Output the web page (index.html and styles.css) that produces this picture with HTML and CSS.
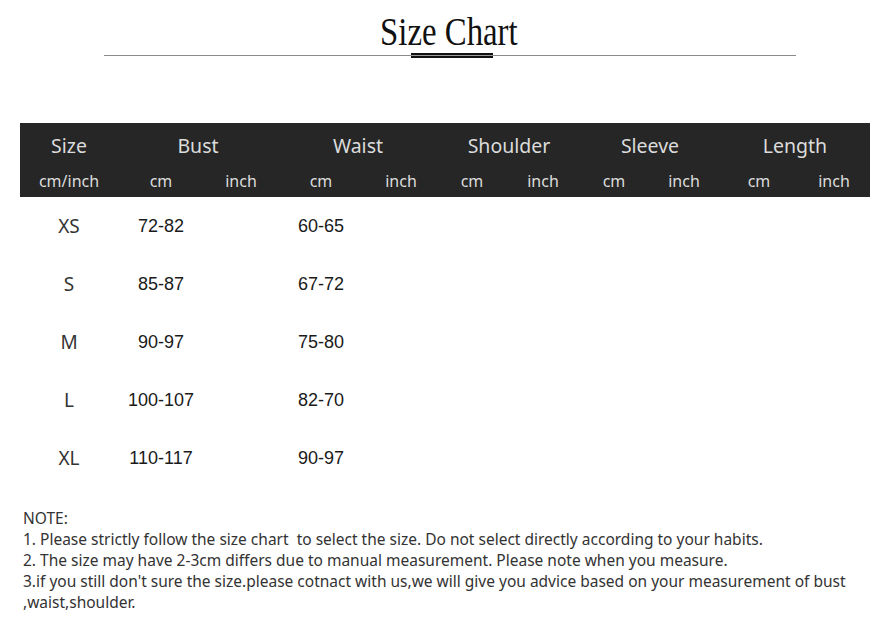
FILE: index.html
```html
<!DOCTYPE html>
<html lang="en">
<head>
<meta charset="utf-8">
<title>Size Chart</title>
<link rel="stylesheet" href="styles.css">
</head>
<body>
<div class="page">
  <header class="heading">
    <h1 class="title"><span class="title-text">Size Chart</span></h1>
    <div class="rule"><div class="rule-bar"></div></div>
  </header>

  <div class="chart">
    <div class="head">
      <div class="h1 c-size">Size</div>
      <div class="h1 span2">Bust</div>
      <div class="h1 span2">Waist</div>
      <div class="h1 span2">Shoulder</div>
      <div class="h1 span2">Sleeve</div>
      <div class="h1 span2">Length</div>

      <div class="h2">cm/inch</div>
      <div class="h2">cm</div><div class="h2">inch</div>
      <div class="h2">cm</div><div class="h2">inch</div>
      <div class="h2">cm</div><div class="h2">inch</div>
      <div class="h2">cm</div><div class="h2">inch</div>
      <div class="h2">cm</div><div class="h2">inch</div>
    </div>

    <div class="body">
      <div class="size">XS</div><div class="num">72-82</div><div class="num"></div><div class="num">60-65</div><div class="num"></div><div></div><div></div><div></div><div></div><div></div><div></div>
      <div class="size">S</div><div class="num">85-87</div><div class="num"></div><div class="num">67-72</div><div class="num"></div><div></div><div></div><div></div><div></div><div></div><div></div>
      <div class="size">M</div><div class="num">90-97</div><div class="num"></div><div class="num">75-80</div><div class="num"></div><div></div><div></div><div></div><div></div><div></div><div></div>
      <div class="size">L</div><div class="num">100-107</div><div class="num"></div><div class="num">82-70</div><div class="num"></div><div></div><div></div><div></div><div></div><div></div><div></div>
      <div class="size">XL</div><div class="num">110-117</div><div class="num"></div><div class="num">90-97</div><div class="num"></div><div></div><div></div><div></div><div></div><div></div><div></div>
    </div>
  </div>

  <div class="notes">
    <p>NOTE:</p>
    <p>1. Please strictly follow the size chart&nbsp; to select the size. Do not select directly according to your habits.</p>
    <p>2. The size may have 2-3cm differs due to manual measurement. Please note when you measure.</p>
    <p>3.if you still don't sure the size.please cotnact with us,we will give you advice based on your measurement of bust</p>
    <p>,waist,shoulder.</p>
  </div>
</div>
</body>
</html>
```

FILE: styles.css
```css
* { box-sizing: border-box; }

html, body {
  margin: 0;
  padding: 0;
  background: #ffffff;
}

.page {
  width: 877px;
  height: 633px;
  overflow: hidden;
  position: relative;
}

.heading {
  padding-top: 12px;
  height: 123px;
}

.title {
  margin: 0;
  height: 40px;
  text-align: center;
  font-family: "Liberation Serif", "Times New Roman", serif;
  font-weight: normal;
  font-size: 40px;
  line-height: 40px;
  color: #111111;
}

.title-text {
  display: inline-block;
  transform: scaleX(0.82);
  margin-left: 20px;
}

.rule {
  position: relative;
  margin-left: 104px;
  margin-top: 3px;
  width: 692px;
  height: 1px;
  background: #8a8a8a;
}

.rule-bar {
  position: absolute;
  left: 307px;
  top: -2px;
  width: 82px;
  height: 5px;
  border-top: 2px solid #111111;
  border-bottom: 2px solid #111111;
  background: #9a9a9a;
}

.chart {
  margin-left: 20px;
  width: 850px;
}

.head,
.body {
  display: grid;
  grid-template-columns: 98px 86px 74px 86px 74px 68px 74px 68px 72px 78px 72px;
}

.head {
  background: #262626;
  grid-template-rows: 43px 31px;
  font-family: "Noto Sans", "Open Sans", sans-serif;
  color: #dcdcdc;
}

.h1 {
  display: flex;
  align-items: center;
  justify-content: center;
  font-size: 19.5px;
  padding-top: 2px;
}

.span2 { grid-column: span 2; }

.h2 {
  display: flex;
  align-items: center;
  justify-content: center;
  font-size: 16px;
  padding-bottom: 2px;
}

.body {
  grid-auto-rows: 58px;
}

.body > div {
  display: flex;
  align-items: center;
  justify-content: center;
}

.size {
  font-family: "Noto Sans", "Open Sans", sans-serif;
  font-size: 19px;
  color: #333333;
}

.num {
  font-family: "Liberation Sans", Arial, sans-serif;
  font-size: 18px;
  color: #1a1a1a;
}

.notes {
  margin-top: 21px;
  padding-left: 23px;
  font-family: "Noto Sans", "Open Sans", sans-serif;
  font-size: 15.5px;
  line-height: 21px;
  color: #333333;
}

.notes p {
  margin: 0;
  white-space: nowrap;
}
```
